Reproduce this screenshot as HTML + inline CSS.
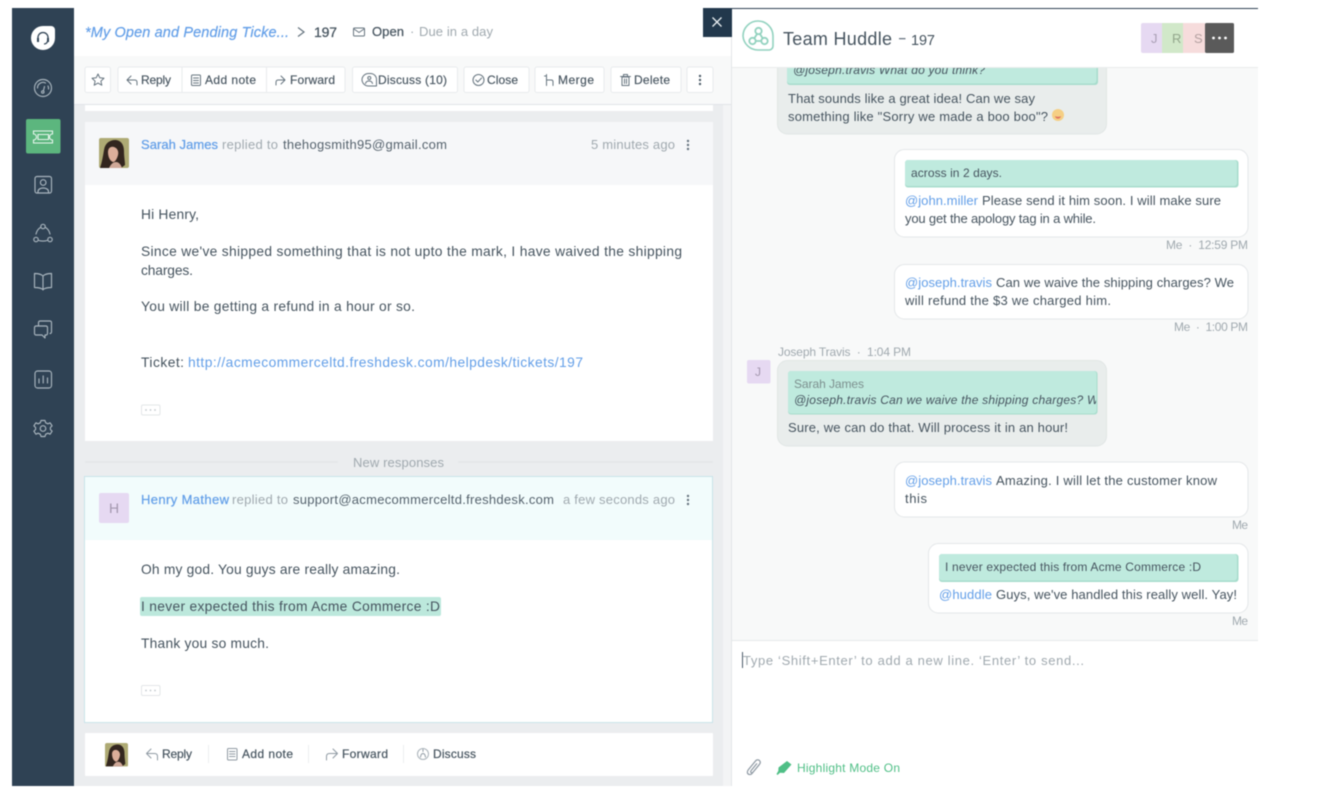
<!DOCTYPE html>
<html lang="en"><head><meta charset="utf-8"><title>Team Huddle - Ticket 197</title>
<style>
html,body{margin:0;padding:0;background:#fff;width:1320px;height:802px;overflow:hidden}
svg{display:block;filter:blur(.5px)}
text{font-family:"Liberation Sans",sans-serif;font-size:13px;fill:#46545f;white-space:pre}
.g{fill:#a0a9af}.b{fill:#639fe8}.m{stroke:#46545f;stroke-width:.25px}
.s{font-size:12px}.i{font-style:italic}
.p{font-size:13.8px}.c{font-size:13px}.t{font-size:12px}
.ic{fill:none;stroke:#a9b5be;stroke-width:1.15;stroke-linecap:round;stroke-linejoin:round}
.tb{fill:none;stroke:#66747f;stroke-width:1;stroke-linecap:round;stroke-linejoin:round}
</style></head><body>
<svg width="1320" height="802" viewBox="0 0 1320 802" xmlns="http://www.w3.org/2000/svg">
<defs>
<clipPath id="cq"><rect x="788" y="371" width="308" height="43"/></clipPath>
<clipPath id="a1"><rect x="99" y="138" width="30" height="30" rx="2"/></clipPath>
<clipPath id="a2"><rect x="105" y="743" width="23" height="24" rx="2"/></clipPath>
<g id="face"><rect width="30" height="30" fill="#aeaa74"/><path d="M1 30C3 24 4 18 5 12 6 5 11 2 16 2c6 0 9 5 9 11 0 6 1 10 1 14l-4 3z" fill="#33261f"/><path d="M9 14c0-4 3-6 6-5 3 1 5 4 4 8-1 4-3 7-5 7-3-1-5-5-5-10z" fill="#dcae9a"/><path d="M10 30c2-4 4-6 7-6 3 0 5 3 6 6z" fill="#cfa898"/></g>
</defs>
<!-- sidebar -->
<rect x="12" y="8" width="62" height="778" fill="#2f4254"/>
<path d="M31 38a12 12 0 0 1 12-12h8a4 4 0 0 1 4 4v8a12 12 0 0 1-24 0z" fill="#fff"/>
<path d="M38 40.500v-3a5 5 0 0 1 10 0v3M47.500 41c0 2-2 3-3.500 3" fill="none" stroke="#2f4254" stroke-width="1.300"/>
<rect x="37" y="38" width="2" height="4" fill="#2f4254"/><rect x="47" y="38" width="2" height="4" fill="#2f4254"/>
<g class="ic"><circle cx="43" cy="88" r="8.500"/><path d="M37.500 88a5.500 5.500 0 0 1 8-5M48 86a5 5 0 0 1 .5 3M44.500 86.500L43.500 90.500"/><circle cx="42.800" cy="92" r="1.200"/></g>
<rect x="26" y="119" width="34.500" height="34.500" rx="2" fill="#5cb67e"/>
<path d="M33.500 131h19v3a3 3 0 0 0 0 6v3h-19v-3a3 3 0 0 0 0-6z M38 134.500h10.500v5h-10.500z" fill="none" stroke="#e7f6ed" stroke-width="1.100"/>
<g class="ic"><rect x="35" y="176.500" width="16.500" height="16.500" rx="2"/><circle cx="43.200" cy="182.500" r="2.800"/><path d="M38 193v-1.500c0-2.500 3-3.500 5.200-3.500s5.300 1 5.300 3.500V193"/>
<circle cx="43" cy="226.500" r="2.200"/><circle cx="36" cy="239.500" r="2.200"/><circle cx="50" cy="239.500" r="2.200"/><path d="M40.500 227.500c-2 1-3.700 3.500-4.500 6.500M45.500 227.500c2 1 3.700 3.500 4.500 6.500M39 240.500c2 .8 6 .8 8 0"/>
<path d="M43 276c-2-2-5-2.500-8.500-2.500v14c3.500 0 6.500 .5 8.500 2 2-1.500 5-2 8.500-2v-14c-3.500 0-6.500 .5-8.500 2.500zM43 276v14"/>
<path d="M38.500 326v-3.500a1.500 1.500 0 0 1 1.500-1.500h10a1.500 1.500 0 0 1 1.500 1.500v9.500a1.500 1.500 0 0 1-1.500 1.500M36 326h10a1.500 1.500 0 0 1 1.500 1.500v6a1.500 1.500 0 0 1-1.500 1.500h-1v3l-3-3h-6a1.500 1.500 0 0 1-1.500-1.500v-6A1.500 1.500 0 0 1 36 326z"/>
<rect x="35" y="371" width="16.500" height="17" rx="2.500"/><path d="M39 383v-4M43.200 383v-7M47.500 383v-5"/>
<path d="M41 420.500h4l.7 2.300 2.200 1 2.200-1 2 3-1.700 1.700v2l1.700 1.700-2 3-2.200-1-2.200 1-.7 2.300h-4l-.7-2.300-2.200-1-2.200 1-2-3 1.700-1.700v-2l-1.700-1.700 2-3 2.200 1 2.200-1z"/><circle cx="43" cy="428.500" r="2.800"/></g>

<!-- left panel background -->
<rect x="74" y="8" width="657" height="778" fill="#ebedef"/>
<rect x="723" y="104" width="8" height="682" fill="#f3f4f5"/>
<rect x="74" y="8" width="657" height="48" fill="#fff"/>
<rect x="74" y="56" width="657" height="48" fill="#f8f9f9"/>
<rect x="74" y="104" width="657" height="1" fill="#e1e5e8"/>
<text x="85" y="37" class="b i" style="font-size:14.5px;stroke:#639fe8;stroke-width:.2px" textLength="204" lengthAdjust="spacing">*My Open and Pending Ticke...</text>
<path d="M298 27.500l6 4.500-6 4.500" fill="none" stroke="#66747f" stroke-width="1.200"/>
<text x="314" y="37" class="m" style="font-size:14px" textLength="23" lengthAdjust="spacing">197</text>
<g class="tb"><rect x="353.500" y="28" width="11" height="8" rx="1"/><path d="M354 29l5 3.500 5-3.500"/></g>
<text x="372" y="36" class="m" textLength="32" lengthAdjust="spacing">Open</text>
<text x="410" y="36" class="g">·</text>
<text x="419" y="36" class="g" textLength="74" lengthAdjust="spacing">Due in a day</text>

<!-- toolbar -->
<g fill="#fff" stroke="#e8ebed"><rect x="85" y="67" width="25.500" height="25.500" rx="2"/><rect x="118" y="67" width="227" height="25.500" rx="2"/><rect x="352.500" y="67" width="105" height="25.500" rx="2"/><rect x="464" y="67" width="65" height="25.500" rx="2"/><rect x="535" y="67" width="69" height="25.500" rx="2"/><rect x="611" y="67" width="70" height="25.500" rx="2"/><rect x="687" y="67" width="26" height="25.500" rx="2"/></g>
<path d="M182 67v25M266.500 67v25" stroke="#e8ebed"/>
<path class="tb" d="M98 74l1.800 3.800 4.200.5-3.100 2.800.9 4.100-3.800-2.100-3.800 2.100.9-4.100-3.100-2.800 4.200-.5z"/>
<g class="tb"><path d="M131 76l-4 4 4 4M127 80h8c1.500 0 2 1 2 2.500V85"/>
<rect x="191.500" y="75" width="9" height="10.500" rx="1"/><path d="M193.500 78h5M193.500 80.500h5M193.500 83h5"/>
<path d="M281 76l4 4-4 4M285 80h-7c-1.500 0-2 1-2 2.500V85"/>
<path d="M362 80a6.500 6.500 0 0 1 6.500-6.500h2a6 6 0 0 1 6 6v6.500h-8a6.500 6.500 0 0 1-6.500-6.500z"/><circle cx="369.300" cy="78" r="1.500"/><path d="M365.500 83.500c.5-2 2-2.500 3.500-2.500s3 .5 3.500 2.500"/>
<circle cx="478.500" cy="80" r="5.500"/><path d="M475.800 80l2 2 3.800-4"/>
<path d="M546.500 74.500v11M544.500 76h2M546.500 80h5c1 0 1.500 .8 1.500 1.800V85.500"/>
<path d="M622 77h7v8.500h-7zM620.500 76.500h10M623.500 76v-1.500h4V76M624.500 79v4.500M626.500 79v4.500"/></g>
<g fill="#4f5e6b"><circle cx="700" cy="76" r="1.200"/><circle cx="700" cy="80" r="1.200"/><circle cx="700" cy="84" r="1.200"/></g>
<text x="141" y="84" class="s m" textLength="30" lengthAdjust="spacing" style="stroke-width:.15px">Reply</text>
<text x="205" y="84" class="s m" textLength="51" lengthAdjust="spacing" style="stroke-width:.15px">Add note</text>
<text x="290" y="84" class="s m" textLength="45" lengthAdjust="spacing" style="stroke-width:.15px">Forward</text>
<text x="378" y="84" class="s m" textLength="69" lengthAdjust="spacing" style="stroke-width:.15px">Discuss (10)</text>
<text x="487" y="84" class="s m" textLength="31" lengthAdjust="spacing" style="stroke-width:.15px">Close</text>
<text x="558" y="84" class="s m" textLength="36" lengthAdjust="spacing" style="stroke-width:.15px">Merge</text>
<text x="634" y="84" class="s m" textLength="36" lengthAdjust="spacing" style="stroke-width:.15px">Delete</text>

<!-- previous card sliver -->
<rect x="85" y="105" width="628" height="6" fill="#fff"/>

<!-- card 1 -->
<rect x="85" y="122" width="628" height="319" fill="#fff"/>
<rect x="85" y="122" width="628" height="63" fill="#f6f7f9"/>
<g clip-path="url(#a1)"><use href="#face" x="99" y="138"/></g>
<text x="141" y="149" class="b" style="stroke:#639fe8;stroke-width:.25px" textLength="77" lengthAdjust="spacing">Sarah James</text>
<text x="222" y="149" class="g" textLength="56" lengthAdjust="spacing">replied to</text>
<text x="283" y="149" style="fill:#55626d" textLength="164" lengthAdjust="spacing">thehogsmith95@gmail.com</text>
<text x="591" y="149" class="g" textLength="84" lengthAdjust="spacing">5 minutes ago</text>
<g fill="#66747f"><circle cx="688" cy="141" r="1.200"/><circle cx="688" cy="145" r="1.200"/><circle cx="688" cy="149" r="1.200"/></g>
<text x="141" y="219" class="p" textLength="58" lengthAdjust="spacing">Hi Henry,</text>
<text x="141" y="256" class="p" textLength="541" lengthAdjust="spacing">Since we've shipped something that is not upto the mark, I have waived the shipping</text>
<text x="141" y="275" class="p" textLength="52" lengthAdjust="spacing">charges.</text>
<text x="141" y="311" class="p" textLength="274" lengthAdjust="spacing">You will be getting a refund in a hour or so.</text>
<text x="141" y="367" class="p" textLength="43" lengthAdjust="spacing">Ticket:</text>
<text x="188" y="367" class="b p" textLength="395" lengthAdjust="spacing">http://acmecommerceltd.freshdesk.com/helpdesk/tickets/197</text>
<rect x="141.500" y="405" width="18.500" height="10" rx="1.500" fill="#fff" stroke="#e3e6e8"/>
<g fill="#c3c9cd"><circle cx="146" cy="410" r=".9"/><circle cx="150.500" cy="410" r=".9"/><circle cx="155" cy="410" r=".9"/></g>

<!-- new responses -->
<path d="M85 462h253M458 462h255" stroke="#e0e3e5"/>
<text x="353" y="467" class="g" textLength="91" lengthAdjust="spacing">New responses</text>

<!-- card 2 -->
<rect x="84.500" y="476.500" width="628" height="246" fill="#fff" stroke="#c9e4ea"/>
<rect x="85" y="477" width="627" height="63" fill="#f2fcfc"/>
<rect x="99" y="493" width="30" height="30" rx="2" fill="#e6d9f2"/>
<text x="109" y="513" style="font-size:14px;fill:#a397ae">H</text>
<text x="141" y="504" class="b" style="stroke:#639fe8;stroke-width:.25px" textLength="88" lengthAdjust="spacing">Henry Mathew</text>
<text x="232" y="504" class="g" textLength="56" lengthAdjust="spacing">replied to</text>
<text x="293" y="504" style="fill:#55626d" textLength="261" lengthAdjust="spacing">support@acmecommerceltd.freshdesk.com</text>
<text x="563" y="504" class="g" textLength="112" lengthAdjust="spacing">a few seconds ago</text>
<g fill="#66747f"><circle cx="688" cy="496" r="1.200"/><circle cx="688" cy="500" r="1.200"/><circle cx="688" cy="504" r="1.200"/></g>
<text x="141" y="574" class="p" textLength="259" lengthAdjust="spacing">Oh my god. You guys are really amazing.</text>
<rect x="140" y="597" width="301" height="19" rx="2" fill="#bce8dc"/>
<text x="141" y="611" class="p" textLength="299" lengthAdjust="spacing">I never expected this from Acme Commerce :D</text>
<text x="141" y="648" class="p" textLength="128" lengthAdjust="spacing">Thank you so much.</text>
<rect x="141.500" y="685.500" width="18.500" height="10" rx="1.500" fill="#fff" stroke="#e3e6e8"/>
<g fill="#c3c9cd"><circle cx="146" cy="690.500" r=".9"/><circle cx="150.500" cy="690.500" r=".9"/><circle cx="155" cy="690.500" r=".9"/></g>

<!-- reply bar -->
<rect x="85" y="733" width="628" height="43" rx="1" fill="#fff"/>
<g clip-path="url(#a2)"><use href="#face" transform="translate(105 743) scale(.78)"/></g>
<g class="tb"><path style="stroke:#8f9aa3" d="M151 749l-4.500 4.500 4.500 4.500M146.500 753.500h8c2 0 3 1 3 3V760"/>
<rect style="stroke:#8f9aa3" x="227.500" y="748.500" width="9.500" height="11.500" rx="1"/><path style="stroke:#8f9aa3" d="M229.500 751.500h5.500M229.500 754h5.500M229.500 756.500h5.500"/>
<path style="stroke:#8f9aa3" d="M333 749l4.500 4.500-4.500 4.500M337.500 753.500h-8c-2 0-3 1-3 3V760"/>
<circle style="stroke:#a9b2b9" cx="423" cy="754" r="5.500"/><path style="stroke:#8f9aa3" d="M420.500 757c.3-2 1.200-3.500 2.500-3.500s2.200 1.500 2.500 3.500M423 749.500v2"/></g>
<path d="M208.500 745v18M308.500 745v18M403.500 745v18" stroke="#eceef0"/>
<text x="162" y="758" class="s m" textLength="30" lengthAdjust="spacing" style="stroke-width:.2px">Reply</text>
<text x="242" y="758" class="s m" textLength="51" lengthAdjust="spacing" style="stroke-width:.2px">Add note</text>
<text x="342" y="758" class="s m" textLength="46" lengthAdjust="spacing" style="stroke-width:.2px">Forward</text>
<text x="433" y="758" class="s m" textLength="43" lengthAdjust="spacing" style="stroke-width:.2px">Discuss</text>

<!-- right panel -->
<rect x="731" y="9" width="527" height="777" fill="#f8f9f9"/>
<rect x="731" y="8" width="527" height="1" fill="#2f4254"/>
<rect x="731" y="9" width="1" height="777" fill="#e3e6e8"/>

<!-- bubble 1 -->
<rect x="777.500" y="50" width="329" height="84" rx="10" fill="#e9edec" stroke="#e1e6e5"/>
<rect x="787" y="50" width="311" height="35" rx="3" fill="#a7dccc"/>
<rect x="787" y="50" width="309.500" height="33.500" rx="3" fill="#bfeade"/>
<text x="793" y="74" class="s i" textLength="192" lengthAdjust="spacing">@joseph.travis What do you think?</text>
<text x="788" y="103" class="c" textLength="247" lengthAdjust="spacing">That sounds like a great idea! Can we say</text>
<text x="788" y="121" class="c" textLength="260" lengthAdjust="spacing">something like "Sorry we made a boo boo"?</text>
<circle cx="1058" cy="115" r="6" fill="#f5cf84"/><path d="M1055 116c1.500 1 4.500 1 6 0-.5 3.500-5.500 3.500-6 0z" fill="#e0705f"/>

<!-- bubble 2 -->
<rect x="894.500" y="149.500" width="353.500" height="87.500" rx="10" fill="#fff" stroke="#e4e7e9"/>
<rect x="905" y="160" width="333.500" height="27.500" rx="3" fill="#a7dccc"/>
<rect x="905" y="160" width="332" height="26" rx="3" fill="#bfeade"/>
<text x="911" y="177" class="t" textLength="91" lengthAdjust="spacing">across in 2 days.</text>
<text x="905" y="205" class="c b" textLength="73" lengthAdjust="spacing">@john.miller</text>
<text x="982" y="205" class="c" textLength="239" lengthAdjust="spacing">Please send it him soon. I will make sure</text>
<text x="905" y="223" class="c" textLength="191" lengthAdjust="spacing">you get the apology tag in a while.</text>
<text x="1166" y="249" class="g" style="font-size:12px" textLength="82" lengthAdjust="spacing">Me  ·  12:59 PM</text>

<!-- bubble 3 -->
<rect x="894.500" y="264.500" width="353.500" height="54.500" rx="10" fill="#fff" stroke="#e4e7e9"/>
<text x="905" y="287" class="c b" textLength="87" lengthAdjust="spacing">@joseph.travis</text>
<text x="996" y="287" class="c" textLength="238" lengthAdjust="spacing">Can we waive the shipping charges? We</text>
<text x="905" y="305" class="c" textLength="206" lengthAdjust="spacing">will refund the $3 we charged him.</text>
<text x="1174" y="331" class="g" style="font-size:12px" textLength="74" lengthAdjust="spacing">Me  ·  1:00 PM</text>

<!-- bubble 4 -->
<text x="778" y="356" class="g" style="font-size:12px" textLength="133" lengthAdjust="spacing">Joseph Travis  ·  1:04 PM</text>
<rect x="747" y="360" width="23.500" height="23.500" rx="2" fill="#e6d9f2"/>
<text x="755" y="376" class="s" style="fill:#a397ae">J</text>
<rect x="777.500" y="360.500" width="329" height="85.500" rx="10" fill="#e9edec" stroke="#e1e6e5"/>
<rect x="788" y="371" width="309.500" height="43.500" rx="3" fill="#a7dccc"/>
<rect x="788" y="371" width="308.500" height="42.500" rx="3" fill="#bfeade"/>
<text x="794" y="388" class="s" style="fill:#7c8f8e" textLength="70" lengthAdjust="spacing">Sarah James</text>
<g clip-path="url(#cq)"><text x="794" y="404" class="s i" textLength="311" lengthAdjust="spacing">@joseph.travis Can we waive the shipping charges? We</text></g>
<text x="788" y="432" class="c" textLength="280" lengthAdjust="spacing">Sure, we can do that. Will process it in an hour!</text>

<!-- bubble 5 -->
<rect x="894.500" y="462" width="353.500" height="55" rx="10" fill="#fff" stroke="#e4e7e9"/>
<text x="905" y="485" class="c b" textLength="87" lengthAdjust="spacing">@joseph.travis</text>
<text x="996" y="485" class="c" textLength="221" lengthAdjust="spacing">Amazing. I will let the customer know</text>
<text x="905" y="503" class="c" textLength="22" lengthAdjust="spacing">this</text>
<text x="1232" y="529" class="g" style="font-size:12px" textLength="16" lengthAdjust="spacing">Me</text>

<!-- bubble 6 -->
<rect x="928.500" y="543.500" width="319.500" height="69.500" rx="10" fill="#fff" stroke="#e4e7e9"/>
<rect x="939" y="554" width="299.500" height="28" rx="3" fill="#a7dccc"/>
<rect x="939" y="554" width="298" height="26.500" rx="3" fill="#bfeade"/>
<text x="945" y="571" class="t" textLength="256" lengthAdjust="spacing">I never expected this from Acme Commerce :D</text>
<text x="939" y="599" class="c b" textLength="53" lengthAdjust="spacing">@huddle</text>
<text x="996" y="599" class="c" textLength="241" lengthAdjust="spacing">Guys, we've handled this really well. Yay!</text>
<text x="1232" y="625" class="g" style="font-size:12px" textLength="16" lengthAdjust="spacing">Me</text>

<!-- huddle header -->
<rect x="732" y="9" width="526" height="58" fill="#fff"/>
<rect x="732" y="67" width="526" height="1" fill="#e9ecec"/>
<rect x="703" y="8" width="29" height="29" fill="#22384c"/>
<path d="M712.500 17.500l9 9M721.500 17.500l-9 9" stroke="#e8edf0" stroke-width="1.300"/>
<path d="M743 36.500a15 15 0 0 1 30 0v10a4 4 0 0 1-4 4h-11a15 15 0 0 1-15-14z" transform="translate(0 -.500)" fill="none" stroke="#92d2bf" stroke-width="1.600"/>
<g fill="none" stroke="#92d2bf" stroke-width="1.800"><circle cx="758.500" cy="31" r="3.200"/><circle cx="752.500" cy="41" r="3.200"/><circle cx="764.500" cy="41" r="3.200"/><path d="M756 41h6M757 34l-2.500 4M760 34l2.500 4"/></g>
<text x="783" y="45" style="font-size:18px" textLength="109" lengthAdjust="spacing">Team Huddle</text>
<rect x="899" y="38" width="6.500" height="1.300" fill="#6a7783"/>
<text x="911" y="45" style="font-size:14.500px" textLength="24" lengthAdjust="spacing">197</text>
<rect x="1141" y="23" width="23" height="30" rx="2" fill="#e6d9f2"/>
<rect x="1162" y="23" width="21" height="30" fill="#d1e8c9"/>
<rect x="1183" y="23" width="22" height="30" fill="#f6dcdc"/>
<rect x="1205" y="23" width="29" height="30" rx="1.500" fill="#5a5a5a"/>
<text x="1151" y="43" style="font-size:13px;fill:#aaa0b5">J</text>
<text x="1172" y="43" style="font-size:13px;fill:#93a68c">R</text>
<text x="1194" y="43" style="font-size:13px;fill:#b3a0a0">S</text>
<g fill="#fff"><circle cx="1213.500" cy="38" r="1.400"/><circle cx="1219.500" cy="38" r="1.400"/><circle cx="1225.500" cy="38" r="1.400"/></g>

<!-- composer -->
<rect x="732" y="641" width="526" height="145" fill="#fff"/>
<rect x="732" y="640" width="526" height="1" fill="#e6e9ea"/>
<rect x="742" y="652" width="1" height="16" fill="#4a5a68"/>
<text x="743" y="665" class="g" style="font-size:13px" textLength="341" lengthAdjust="spacing">Type ‘Shift+Enter’ to add a new line. ‘Enter’ to send...</text>
<path d="M759 765l-7 8.500c-1.500 1.800-4 1-4.500-.5-.4-1.200 0-2.300 1-3.500l7-8.500c1-1.300 2.600-1.500 3.800-.6 1.200 1 1.200 2.500.2 3.800l-6.500 8c-.6.700-1.500.8-2 .3-.5-.5-.4-1.300.2-2l5.500-6.800" fill="none" stroke="#8e99a3" stroke-width="1.200" stroke-linecap="round"/>
<path d="M787 761l4.500 3.500-7.500 8.500-4-.2-2.500 2.200-1-1 1.800-3 .2-3.500z" fill="#4fbf86"/>
<text x="797" y="772" style="font-size:12px;fill:#4fbf86" textLength="103" lengthAdjust="spacing">Highlight Mode On</text>
</svg>
</body></html>
